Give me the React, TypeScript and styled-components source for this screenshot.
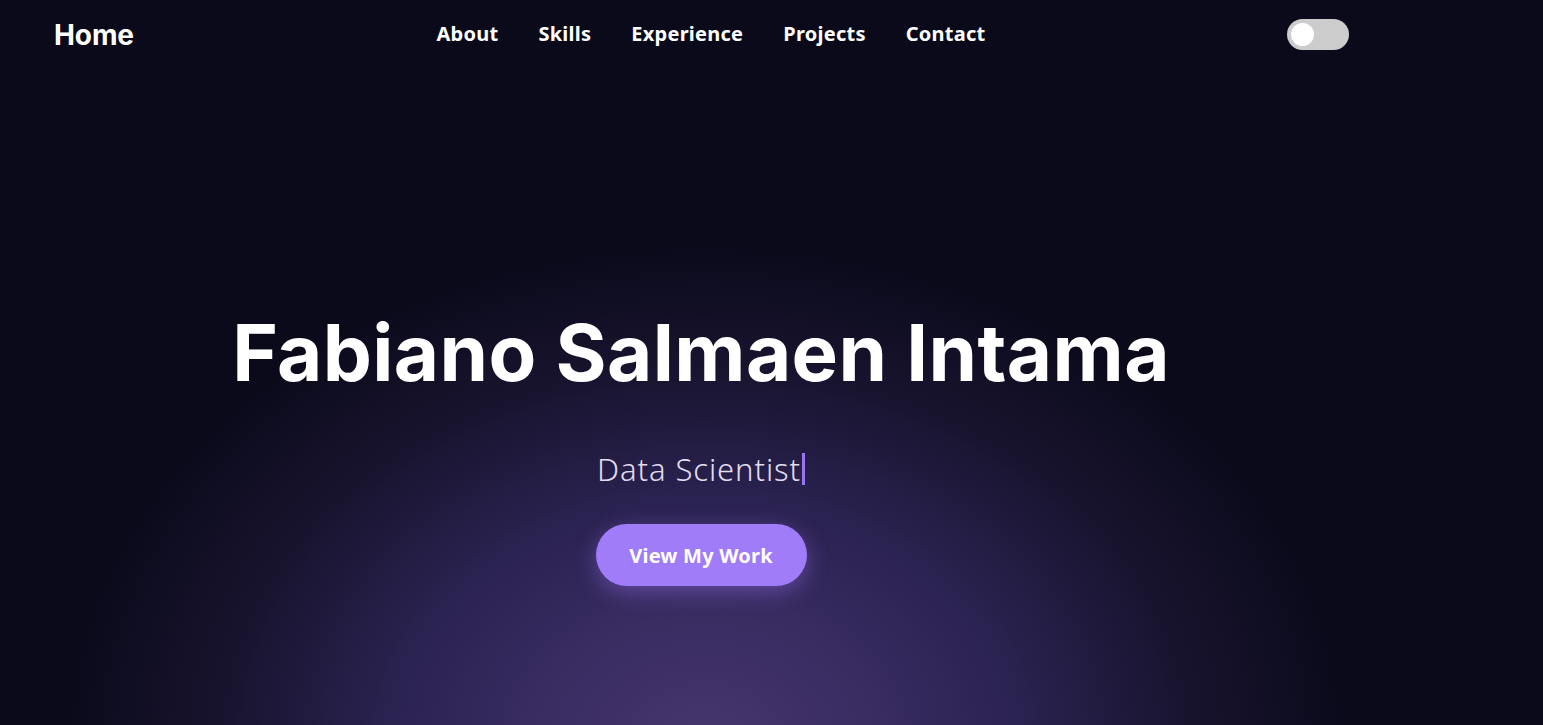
import React from "react";
import styled, { createGlobalStyle } from "styled-components";

const Global = createGlobalStyle`
  html, body { margin: 0; padding: 0; }
  body {
    background: #0b0a1b;
    font-family: "Open Sans", "Noto Sans", sans-serif;
    overflow: hidden;
  }
`;

const Page = styled.div`
  width: 1543px;
  height: 725px;
  background:
    radial-gradient(ellipse 640px 500px at 705px 745px, #46366f 0%, #3a2d62 25%, #2a2250 50%, #18142f 75%, #0b0a1b 100%),
    #0b0a1b;
  display: flex;
  flex-direction: column;
`;

const Frame = styled.div`
  width: 1402px;
  display: flex;
  flex-direction: column;
  flex: 1;
`;

const NavBar = styled.nav`
  height: 68px;
  padding: 0 54px;
  display: grid;
  grid-template-columns: 1fr auto 1fr;
  align-items: center;
`;

const Brand = styled.a`
  font-family: "Inter", "Noto Sans", sans-serif;
  font-weight: 700;
  font-size: 28px;
  color: #ffffff;
  text-decoration: none;
  letter-spacing: -0.1px;
  margin-top: 1px;
`;

const Links = styled.div`
  display: flex;
  gap: 40px;
  align-items: center;
  margin-left: 20px;
  margin-top: -2px;
`;

const NavLink = styled.a`
  font-family: "Noto Sans", "Open Sans", sans-serif;
  font-weight: 700;
  font-size: 20px;
  color: #ffffff;
  text-decoration: none;
  letter-spacing: 0.25px;
`;

const ToggleWrap = styled.div`
  display: flex;
  justify-content: flex-end;
`;

const Toggle = styled.div`
  width: 62px;
  height: 31px;
  border-radius: 16px;
  background: #cccccc;
  display: flex;
  align-items: center;
  padding-left: 4px;
  box-sizing: border-box;
  margin-right: -1px;
`;

const Knob = styled.div`
  width: 23px;
  height: 23px;
  border-radius: 50%;
  background: #ffffff;
`;

const Hero = styled.section`
  display: flex;
  flex-direction: column;
  align-items: center;
  padding-top: 237px;
`;

const Name = styled.h1`
  margin: 0;
  font-family: "Inter", "Noto Sans", sans-serif;
  font-weight: 700;
  font-size: 78px;
  line-height: 96px;
  color: #ffffff;
  letter-spacing: 0.4px;
`;

const Subtitle = styled.p`
  margin: 48px 0 0;
  font-family: "Noto Sans", "Open Sans", sans-serif;
  font-weight: 300;
  font-size: 31px;
  line-height: 40px;
  letter-spacing: 0.9px;
  color: #e2def0;
  display: flex;
  align-items: center;
`;

const Caret = styled.span`
  display: inline-block;
  width: 3px;
  height: 32px;
  background: #9a73f0;
  margin-left: 1px;
`;

const Button = styled.button`
  margin-top: 35px;
  width: 211px;
  height: 62px;
  border: none;
  border-radius: 31px;
  background: #a07cf8;
  color: #ffffff;
  font-family: "Noto Sans", "Open Sans", sans-serif;
  font-weight: 700;
  font-size: 20px;
  letter-spacing: 0.2px;
  box-shadow: 0 6px 22px rgba(150, 110, 240, 0.45);
  cursor: pointer;
`;

export default function App() {
  const links = ["About", "Skills", "Experience", "Projects", "Contact"];
  return (
    <>
      <Global />
      <Page>
        <Frame>
          <NavBar>
            <Brand href="#">Home</Brand>
            <Links>
              {links.map((l) => (
                <NavLink key={l} href="#">
                  {l}
                </NavLink>
              ))}
            </Links>
            <ToggleWrap>
              <Toggle>
                <Knob />
              </Toggle>
            </ToggleWrap>
          </NavBar>
          <Hero>
            <Name>Fabiano Salmaen Intama</Name>
            <Subtitle>
              Data Scientist
              <Caret />
            </Subtitle>
            <Button>View My Work</Button>
          </Hero>
        </Frame>
      </Page>
    </>
  );
}
